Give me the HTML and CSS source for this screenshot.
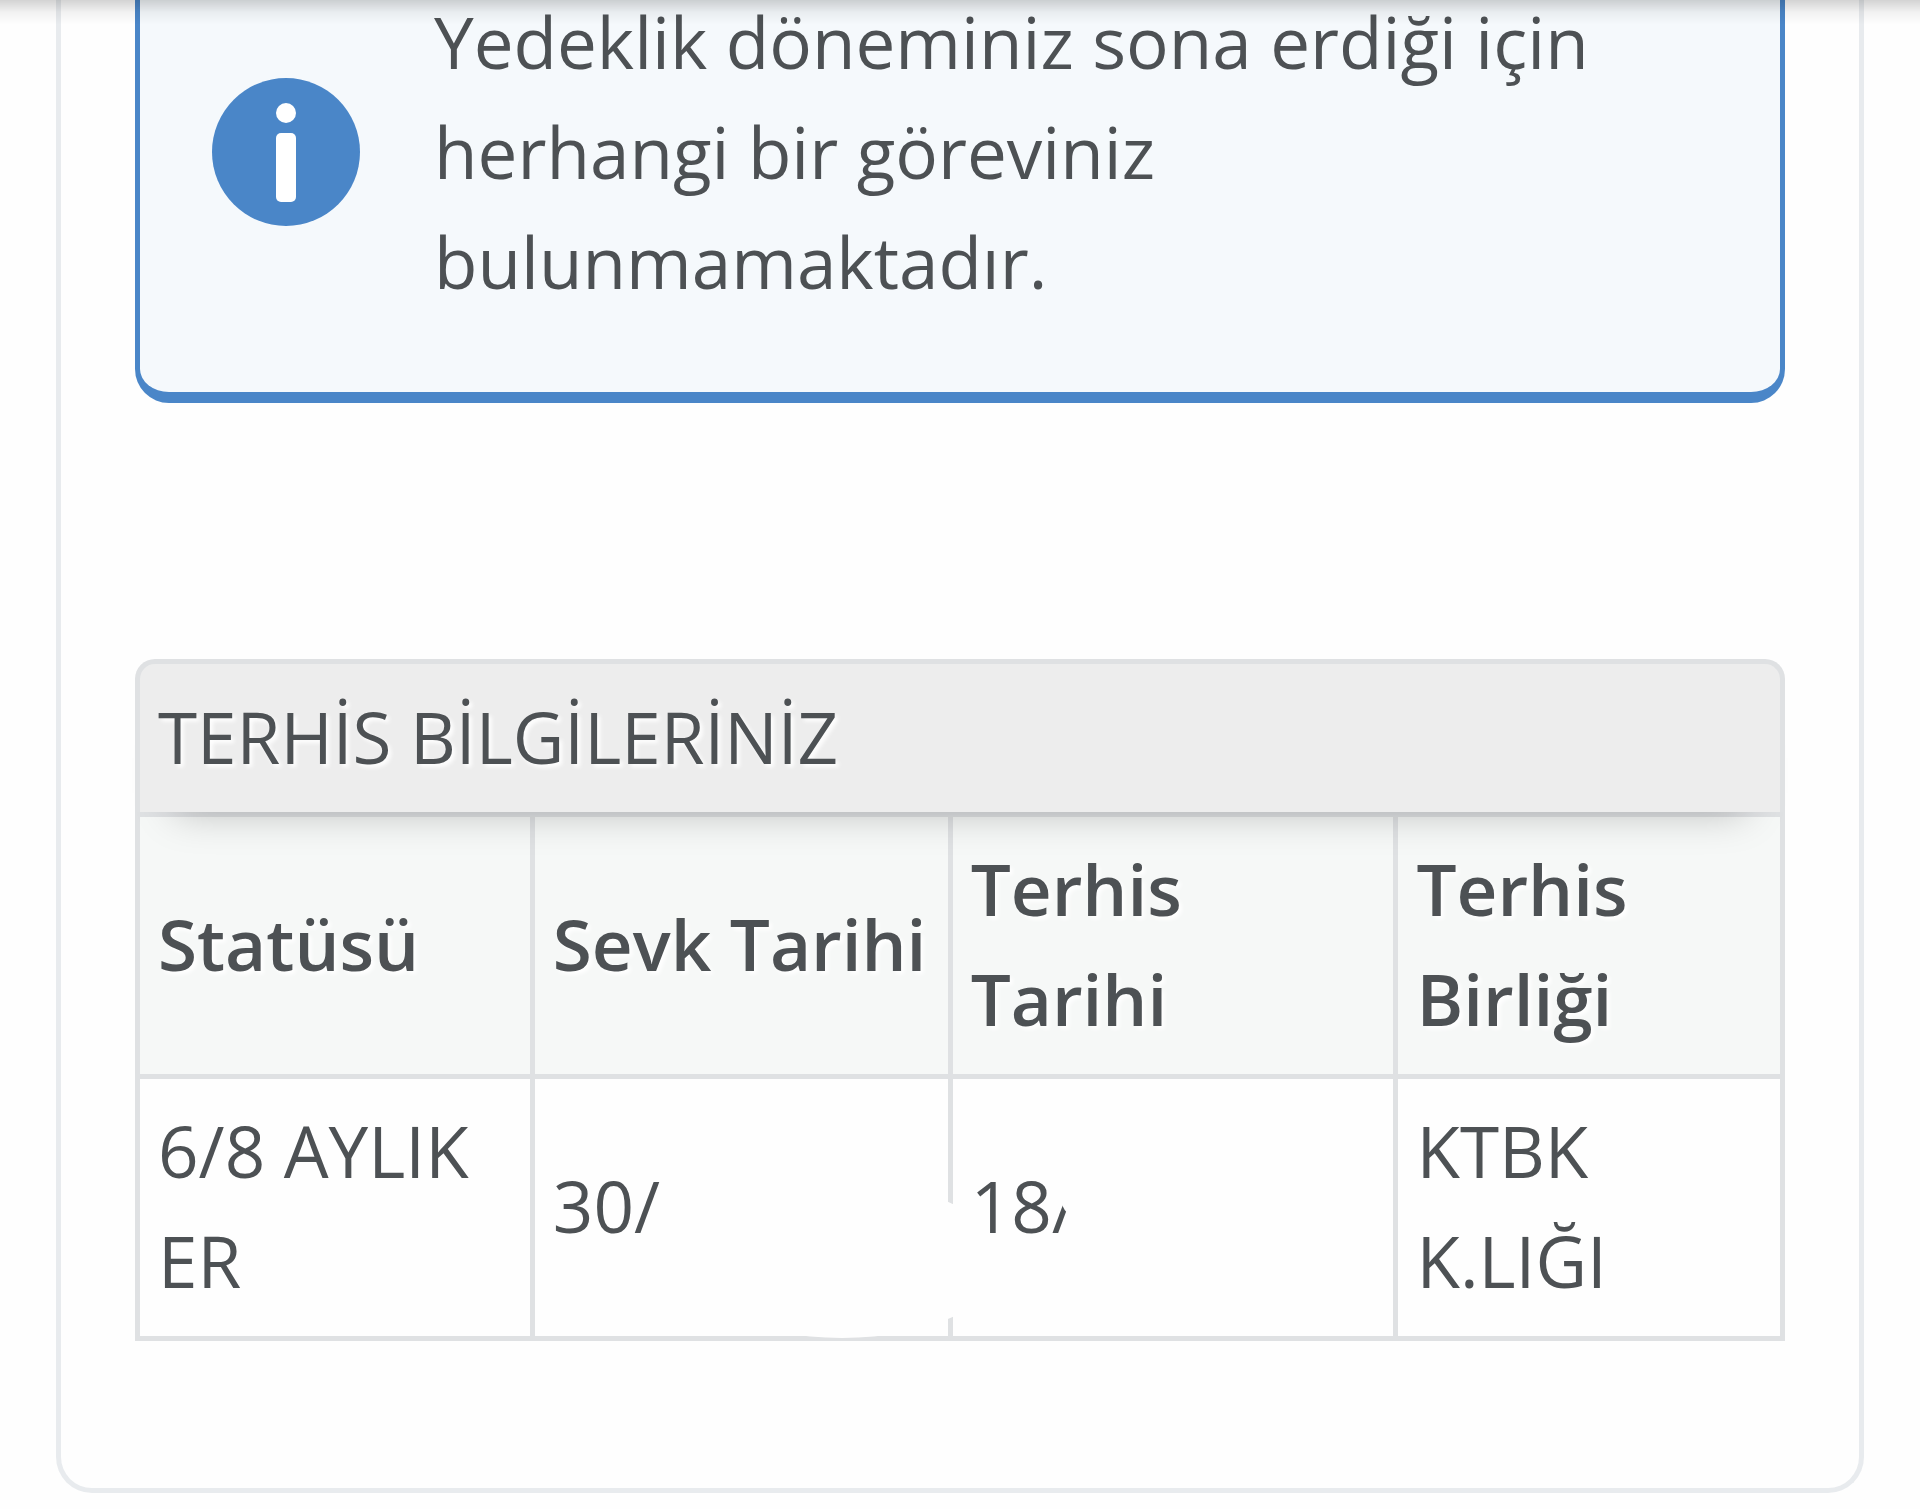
FILE: index.html
```html
<!DOCTYPE html>
<html lang="tr">
<head>
    <meta charset="UTF-8">
    <meta name="viewport" content="width=device-width, initial-scale=1.0">
    <title>Terhis Bilgileriniz</title>
    <link rel="stylesheet" href="styles.css">
</head>
<body>

<div class="top-shadow"></div>

<main class="card">
    <div class="info-box">
        <svg class="info-icon" viewBox="0 0 148 148" aria-hidden="true">
            <circle cx="74" cy="74" r="74" fill="#4a86c8"/>
            <circle cx="74" cy="35" r="10" fill="#fff"/>
            <rect x="64" y="55" width="20" height="69" rx="5" fill="#fff"/>
        </svg>
        <p class="info-text">Yedeklik döneminiz sona erdiği için herhangi bir göreviniz bulunmamaktadır.</p>
    </div>

    <section class="panel">
        <h2 class="panel-title">TERHİS BİLGİLERİNİZ</h2>
        <table class="data-table">
            <thead>
                <tr>
                    <th class="col-status">Statüsü</th>
                    <th class="col-start">Sevk Tarihi</th>
                    <th class="col-end">Terhis Tarihi</th>
                    <th class="col-unit">Terhis Birliği</th>
                </tr>
            </thead>
            <tbody>
                <tr>
                    <td>6/8 AYLIK ER</td>
                    <td class="masked">30/<span class="mask mask-start"></span></td>
                    <td class="masked">18/<span class="mask mask-end"></span></td>
                    <td>KTBK K.LIĞI</td>
                </tr>
            </tbody>
        </table>
    </section>
</main>

</body>
</html>
```
FILE: styles.css
```css
* {
    box-sizing: border-box;
}
body {
    margin: 0;
    background-color: #fefefe;
    color: #4d5154;
    font-family: "Open Sans", "Noto Sans", sans-serif;
    font-size: 71px;
    line-height: 110px;
}
/* shadow of the header bar above the page */
.top-shadow {
    position: fixed;
    top: 0;
    left: 0;
    right: 0;
    height: 24px;
    background: linear-gradient(rgba(0, 0, 0, 0.17), rgba(0, 0, 0, 0.05) 50%, rgba(0, 0, 0, 0));
    z-index: 2;
}
.card {
    margin: -13px 56px 0;
    padding: 0 74px 147px;
    border: 5px solid #e8ebee;
    border-top: 0;
    border-radius: 0 0 36px 36px;
}
.info-box {
    display: flex;
    align-items: center;
    gap: 74px;
    padding: 0 72px 75px;
    border: 5px solid #4a86c8;
    border-top: 0;
    border-bottom-width: 11px;
    border-radius: 0 0 34px 34px;
    background-color: #f5f9fc;
}
.info-icon {
    flex: none;
    width: 148px;
    height: 148px;
}
.info-text {
    margin: 0;
}
.panel {
    margin-top: 256px;
}
.panel-title {
    position: relative;
    z-index: 1;
    margin: 0;
    padding: 18px 18px 20px;
    border: 5px solid #dfe1e3;
    border-bottom: 0;
    border-radius: 20px 20px 0 0;
    background-color: #ededed;
    box-shadow: 0 40px 40px -40px rgba(0, 0, 0, 0.25);
    font-size: 71px;
    font-weight: 400;
    text-shadow: 3px 3px 4px #fff;
}
.data-table {
    width: 100%;
    table-layout: fixed;
    border-collapse: collapse;
}
.data-table th,
.data-table td {
    padding: 17px 18px 20px;
    border: 5px solid #dfe1e3;
    text-align: left;
    vertical-align: middle;
}
.data-table th {
    background-color: #f6f8f7;
    font-weight: 600;
    text-shadow: 3px 3px 4px #fff;
}
.col-status {
    width: 24%;
}
.col-start {
    width: 25.4%;
}
.col-end {
    width: 27.1%;
}
.masked {
    position: relative;
}
/* hidden part of the dates */
.mask {
    position: absolute;
    border-radius: 50%;
    background-color: #fefefe;
}
.mask-start {
    top: 104px;
    left: 145px;
    width: 324px;
    height: 155px;
}
.mask-end {
    top: 70px;
    left: 105px;
    width: 78px;
    height: 78px;
}
```
